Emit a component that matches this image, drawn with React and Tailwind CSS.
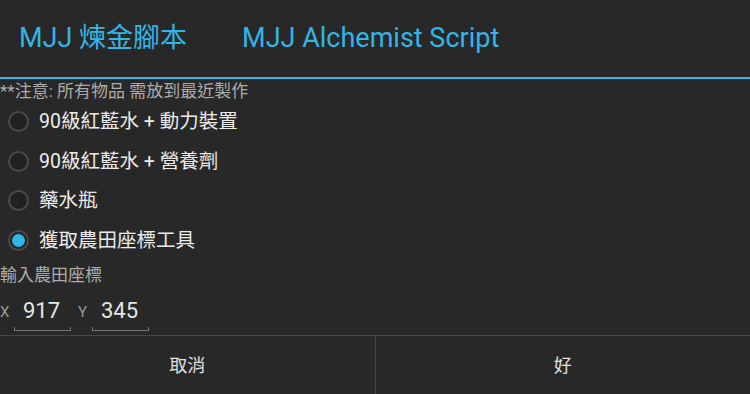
import React, { useState } from 'react';

const FONT = { fontFamily: 'Roboto, "Noto Sans CJK TC", sans-serif' };

const options = ['90級紅藍水 + 動力裝置', '90級紅藍水 + 營養劑', '藥水瓶', '獲取農田座標工具'];

function Radio({ checked }) {
    return (
        <span className="flex items-center justify-center w-[21px] h-[21px] rounded-full border-2 border-[#4a4a4a] bg-[#222]">
            {checked && <span className="w-[13px] h-[13px] rounded-full bg-[#33b5e5]" />}
        </span>
    );
}

function CoordInput({ label, value }) {
    return (
        <div className="flex items-center">
            <span className="text-[15px] text-[#9a9a9a] w-[14px] -mt-[4px]">{label}</span>
            <div className="flex flex-col w-[57px]">
                <span className="text-[22px] text-[#e6e6e6] leading-[26px] pl-[9px]">{value}</span>
                <span className="h-[4px] mt-[3px] border-x border-b border-[#777]" />
            </div>
        </div>
    );
}

export default function App() {
    const [selected, setSelected] = useState(3);

    return (
        <div className="w-[750px] h-[394px] bg-[#282828] flex flex-col overflow-hidden" style={FONT}>
            <div className="h-[77px] flex items-center gap-[55px] pl-[19px] text-[27px] text-[#33b5e5]">
                <span>MJJ 煉金腳本</span>
                <span>MJJ Alchemist Script</span>
            </div>
            <div className="h-[2px] bg-[#33b5e5]" />

            <div className="flex-1 flex flex-col">
                <div className="text-[17px] text-[#acacac] leading-[22px] mt-[1px]">**注意: 所有物品 需放到最近製作</div>
                {options.map((opt, i) => (
                    <div
                        key={opt}
                        className="flex items-center h-[39.5px] pl-[8px] gap-[10px] cursor-pointer first:mt-[2px]"
                        onClick={() => setSelected(i)}
                    >
                        <Radio checked={selected === i} />
                        <span className="text-[19.5px] text-[#ececec]">{opt}</span>
                    </div>
                ))}
                <div className="text-[17px] text-[#acacac] leading-[22px] mt-[4px]">輸入農田座標</div>
                <div className="flex items-center gap-[7px] mt-[12px]">
                    <CoordInput label="X" value="917" />
                    <CoordInput label="Y" value="345" />
                </div>
            </div>

            <div className="h-[59px] flex border-t border-[#464646]">
                <button className="flex-1 flex items-center justify-center text-[18px] text-[#e0e0e0]">取消</button>
                <button className="flex-1 flex items-center justify-center text-[18px] text-[#e0e0e0] border-l border-[#464646]">好</button>
            </div>
        </div>
    );
}
